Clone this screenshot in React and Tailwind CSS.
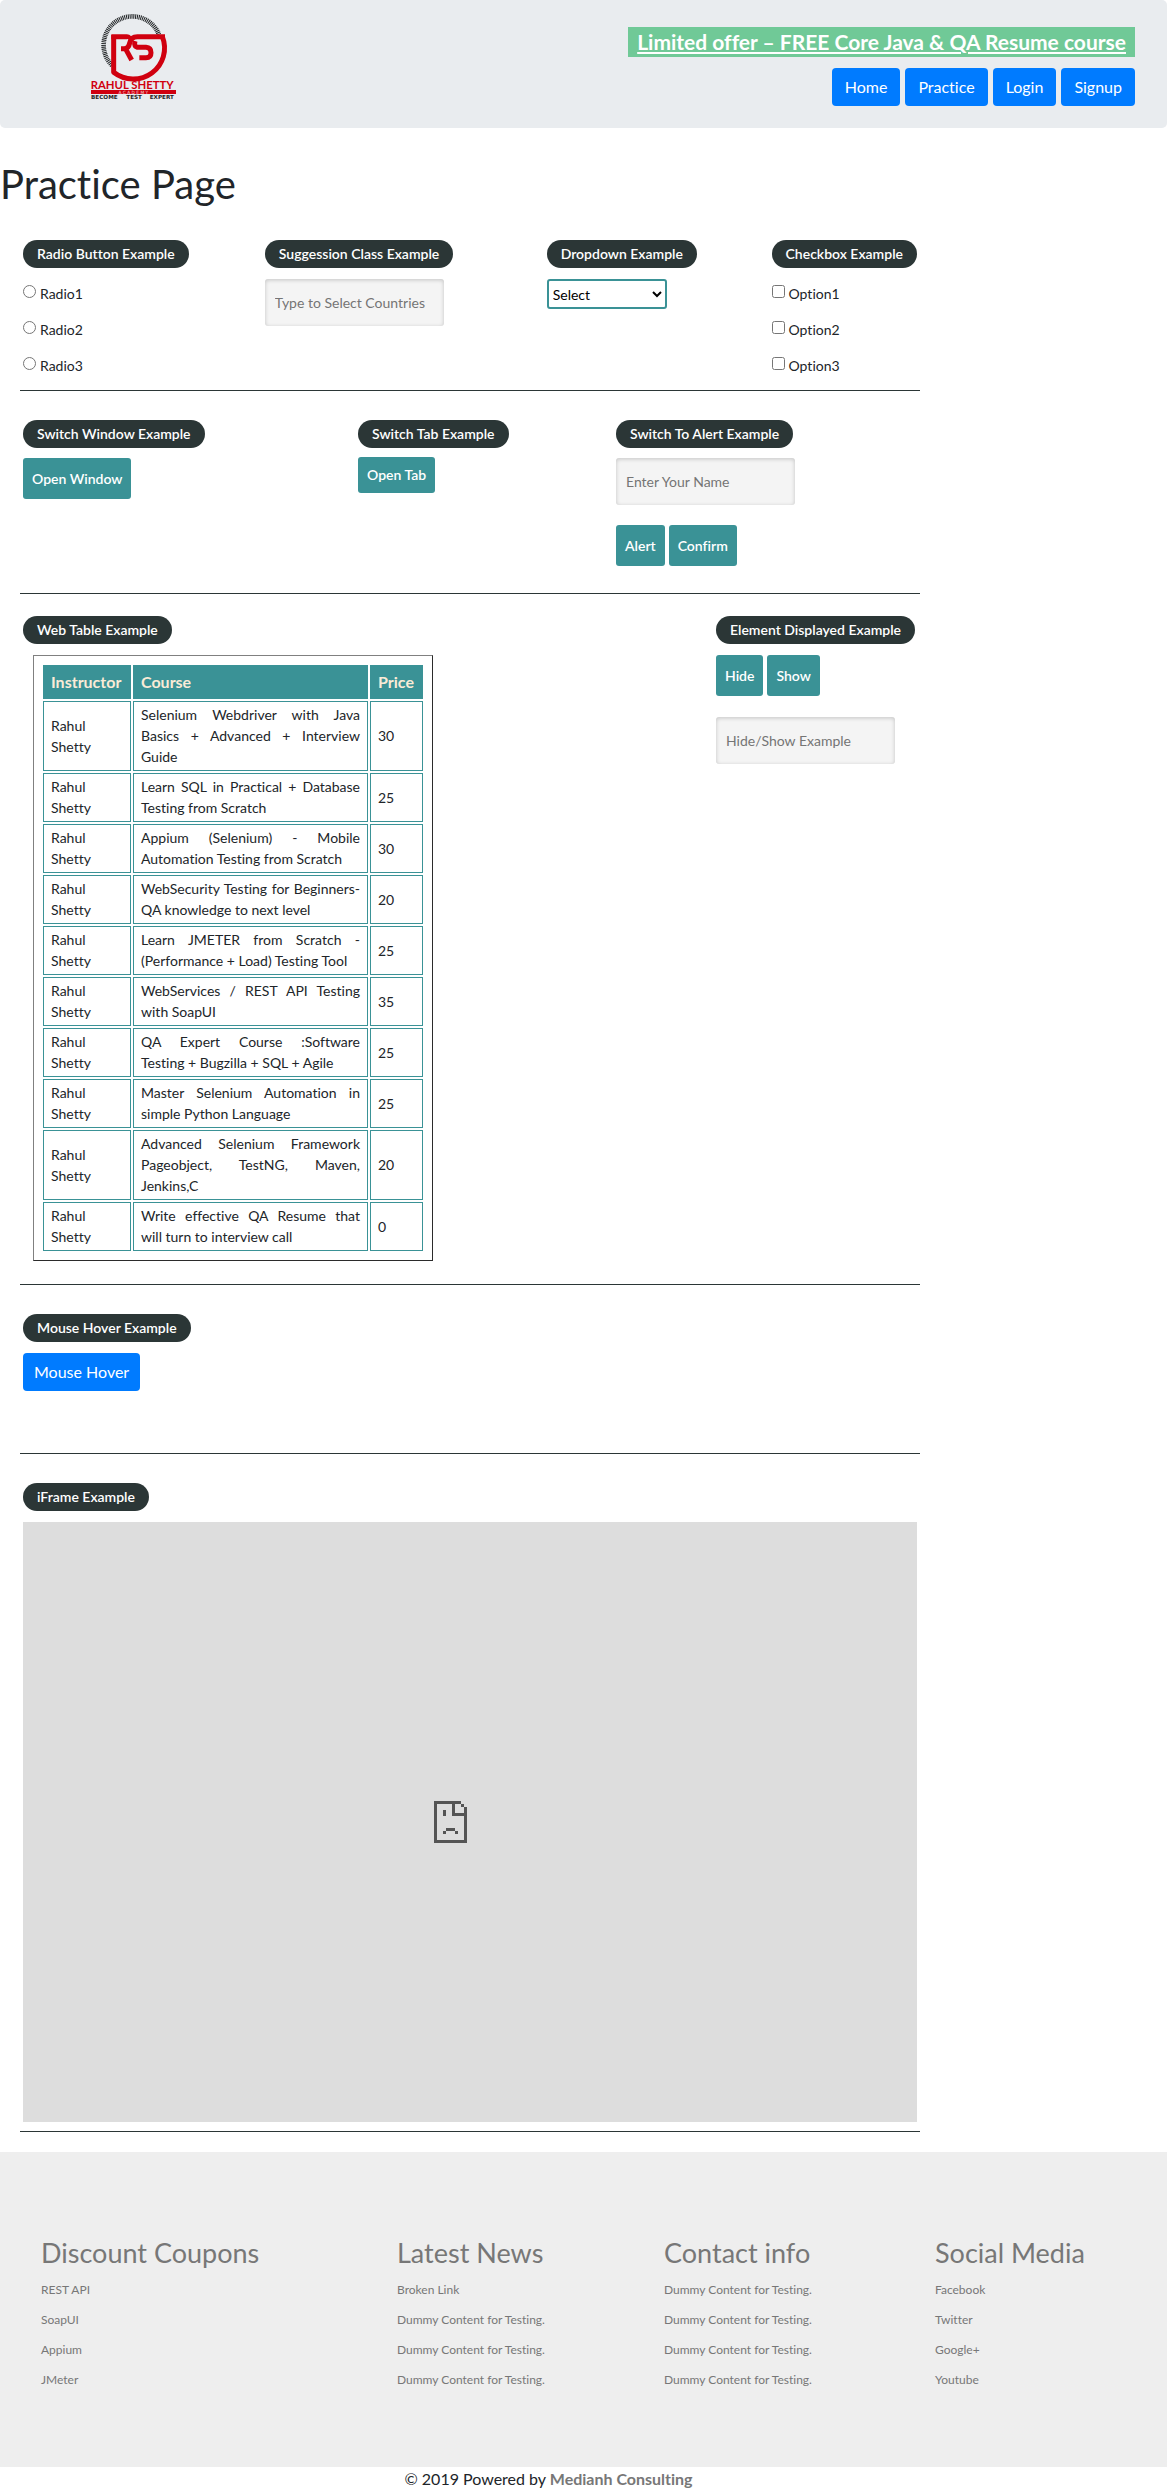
import { useState } from "react";

const COURSES = [
  ["Selenium Webdriver with Java Basics + Advanced + Interview Guide", 30],
  ["Learn SQL in Practical + Database Testing from Scratch", 25],
  ["Appium (Selenium) - Mobile Automation Testing from Scratch", 30],
  ["WebSecurity Testing for Beginners-QA knowledge to next level", 20],
  ["Learn JMETER from Scratch - (Performance + Load) Testing Tool", 25],
  ["WebServices / REST API Testing with SoapUI", 35],
  ["QA Expert Course :Software Testing + Bugzilla + SQL + Agile", 25],
  ["Master Selenium Automation in simple Python Language", 25],
  ["Advanced Selenium Framework Pageobject, TestNG, Maven, Jenkins,C", 20],
  ["Write effective QA Resume that will turn to interview call", 0],
];

const DUMMY = "Dummy Content for Testing.";

const FOOTER = [
  ["Discount Coupons", ["REST API", "SoapUI", "Appium", "JMeter"]],
  ["Latest News", ["Broken Link", DUMMY, DUMMY, DUMMY]],
  ["Contact info", [DUMMY, DUMMY, DUMMY, DUMMY]],
  ["Social Media", ["Facebook", "Twitter", "Google+", "Youtube"]],
];

function Logo() {
  return (
    <svg viewBox="33 27 255 255" className="h-[85px] w-[85px]" role="img" aria-label="Rahul Shetty Academy">
      <path d="M96 181A86 86 0 1 1 237 89" fill="none" stroke="#1f2224" strokeWidth="14" strokeDasharray="3 2.4" />
      <g fill="none" stroke="#d0000f" strokeWidth="15">
        <path d="M94 95H140Q150 96 147 104" />
        <path d="M101 90V202A94 93 0 0 0 247 95" strokeLinejoin="round" />
        <path d="M123 131H132Q146 131 149 114Q153 95 172 95H255" />
        <path d="M138 134L155 165" />
        <path d="M165 108Q160 127 176 127H198Q213 128 213 143Q213 158 198 158H178" />
      </g>
      <text x="32" y="251" fontFamily="Lato, sans-serif" fontSize="34" fontWeight="700" fill="#d0000f">RAHUL SHETTY</text>
      <rect x="33" y="255" width="255" height="12" fill="#d0000f" />
      <text x="160" y="266" textAnchor="middle" fontFamily="DejaVu Sans, sans-serif" fontSize="13" fill="#f3d5d8">A C A D E M Y</text>
      <g fontFamily="DejaVu Sans, sans-serif" fontSize="17" fontWeight="700" fill="#1f2224">
        <text x="33" y="281">BECOME</text>
        <text x="139" y="281">TEST</text>
        <text x="209" y="281">EXPERT</text>
      </g>
    </svg>
  );
}

function Legend({ children }) {
  return (
    <h2 className="w-fit rounded-full bg-[#2b3636] px-[14px] text-sm leading-7 font-semibold whitespace-nowrap text-white">
      {children}
    </h2>
  );
}

function TealButton({ children, className = "h-[41px]" }) {
  return (
    <button type="button" className={`rounded-[3px] bg-[#3a9296] px-[9px] text-sm font-semibold whitespace-nowrap text-white ${className}`}>
      {children}
    </button>
  );
}

function TextBox({ label }) {
  return (
    <input
      type="text"
      aria-label={label}
      placeholder={label}
      className="block h-[47px] w-[179px] rounded-[3px] bg-[#f4f4f4] px-[10px] text-sm text-[#212529] shadow-[inset_0_1px_4px_rgba(0,0,0,0.2)] placeholder:text-[#757575]"
    />
  );
}

function Choices({ type, names }) {
  return (
    <div className="mt-[15px] flex flex-col gap-[15px]">
      {names.map((name) => (
        <label key={name} className="flex items-start gap-1 text-sm leading-[21px]">
          <input type={type} name={type} className="mt-[2px] h-[13px] w-[13px]" />
          {name}
        </label>
      ))}
    </div>
  );
}

function NavButton({ children }) {
  return (
    <a href="#" className="rounded bg-[#007bff] px-[13px] py-[7px] text-base leading-6 text-white">
      {children}
    </a>
  );
}

function CourseTable() {
  return (
    <table className="mt-[11px] ml-[10px] w-[400px] table-fixed border-separate border-spacing-[2px] border border-t-[#808080] border-r-[#2b2b2b] border-b-[#2b2b2b] border-l-[#808080] p-[7px] text-sm leading-[21px]">
      <colgroup>
        <col className="w-[88px]" />
        <col className="w-[235px]" />
        <col className="w-[53px]" />
      </colgroup>
      <thead>
        <tr className="h-[34px] text-left text-base text-[#faebd7]">
          {["Instructor", "Course", "Price"].map((title) => (
            <th key={title} className="bg-[#3a9296] px-2 py-0 font-bold">{title}</th>
          ))}
        </tr>
      </thead>
      <tbody>
        {COURSES.map(([course, price]) => (
          <tr key={course}>
            <td className="border border-[#3a9296] px-[7px] pt-[2px] pb-[3px]">Rahul Shetty</td>
            <td className="border border-[#3a9296] px-[7px] pt-[2px] pb-[3px] text-justify">{course}</td>
            <td className="border border-[#3a9296] px-[7px] pt-[2px] pb-[3px]">{price}</td>
          </tr>
        ))}
      </tbody>
    </table>
  );
}

function BrokenPage() {
  return (
    <svg viewBox="0 0 11 14" className="h-[42px] w-[33px]" fill="#545454" shapeRendering="crispEdges" aria-hidden="true">
      <path d="M0 0H9V1H7V4H10V2H11V14H0ZM1 1V13H10V5H6V1Z" fillRule="evenodd" />
      <path d="M9 1H10V2H9ZM3 3H4V5H3ZM4 9H7V10H4ZM3 10H4V11H3ZM7 10H8V11H7Z" />
    </svg>
  );
}

export default function App() {
  const [choice, setChoice] = useState("");
  return (
    <div className="bg-white font-[Lato,sans-serif] text-[#212529] [font-variant-ligatures:none]">
      <header className="flex min-h-[128px] items-start justify-between rounded-[5px] bg-[#e9ecef] pr-8 pl-[91px]">
        <div className="pt-[14px]">
          <Logo />
        </div>
        <div className="flex flex-col items-end gap-[11px] pt-[27px]">
          <a href="#" className="bg-[#70c997] px-[9px] text-[21px] leading-[30px] font-bold text-white underline decoration-2 underline-offset-2">
            Limited offer – FREE Core Java &amp; QA Resume course
          </a>
          <nav className="flex gap-[5px]">
            <NavButton>Home</NavButton>
            <NavButton>Practice</NavButton>
            <NavButton>Login</NavButton>
            <NavButton>Signup</NavButton>
          </nav>
        </div>
      </header>

      <h1 className="mt-8 text-[40px] leading-[48px]">Practice Page</h1>

      <main className="mt-[3px] ml-5 max-w-[900px]">
        <section className="grid grid-cols-[242fr_282fr_225fr_145fr] border-b border-[#2b3636] px-[3px] pt-[29px] pb-[14px]">
          <div>
            <Legend>Radio Button Example</Legend>
            <Choices type="radio" names={["Radio1", "Radio2", "Radio3"]} />
          </div>
          <div className="flex flex-col gap-[11px]">
            <Legend>Suggession Class Example</Legend>
            <TextBox label="Type to Select Countries" />
          </div>
          <div className="flex flex-col gap-[11px]">
            <Legend>Dropdown Example</Legend>
            <select
              aria-label="Dropdown Example"
              value={choice}
              onChange={(e) => setChoice(e.target.value)}
              className="h-[30px] w-[120px] rounded-[3px] border-2 border-[#3a9296] bg-white text-sm text-black"
            >
              <option value="">Select</option>
              <option value="1">Option1</option>
              <option value="2">Option2</option>
              <option value="3">Option3</option>
            </select>
          </div>
          <div>
            <Legend>Checkbox Example</Legend>
            <Choices type="checkbox" names={["Option1", "Option2", "Option3"]} />
          </div>
        </section>

        <section className="grid grid-cols-[335fr_258fr_301fr] items-start border-b border-[#2b3636] px-[3px] pt-[29px] pb-[27px]">
          <div className="flex flex-col items-start gap-[10px]">
            <Legend>Switch Window Example</Legend>
            <TealButton>Open Window</TealButton>
          </div>
          <div className="flex flex-col items-start gap-[9px]">
            <Legend>Switch Tab Example</Legend>
            <TealButton className="h-9">Open Tab</TealButton>
          </div>
          <div>
            <Legend>Switch To Alert Example</Legend>
            <div className="mt-[10px]">
              <TextBox label="Enter Your Name" />
            </div>
            <div className="mt-5 flex gap-1">
              <TealButton>Alert</TealButton>
              <TealButton>Confirm</TealButton>
            </div>
          </div>
        </section>

        <section className="grid grid-cols-[693fr_201fr] items-start border-b border-[#2b3636] px-[3px] pt-[22px] pb-[23px]">
          <div>
            <Legend>Web Table Example</Legend>
            <CourseTable />
          </div>
          <div>
            <Legend>Element Displayed Example</Legend>
            <div className="mt-[11px] mb-[21px] flex gap-1">
              <TealButton>Hide</TealButton>
              <TealButton>Show</TealButton>
            </div>
            <TextBox label="Hide/Show Example" />
          </div>
        </section>

        <section className="flex flex-col items-start gap-[11px] border-b border-[#2b3636] px-[3px] pt-[29px] pb-[62px]">
          <Legend>Mouse Hover Example</Legend>
          <button type="button" className="rounded bg-[#007bff] px-[11px] py-[7px] text-base leading-6 text-white">
            Mouse Hover
          </button>
        </section>

        <section className="flex flex-col gap-[11px] border-b border-[#2b3636] px-[3px] pt-[29px] pb-[9px]">
          <Legend>iFrame Example</Legend>
          <div className="flex h-[600px] items-center justify-center bg-[#ddd] pr-10">
            <BrokenPage />
          </div>
        </section>
      </main>

      <footer>
        <div className="mt-5 grid grid-cols-[356fr_267fr_271fr_191fr] bg-[#eee] px-[41px] pt-[84px] pb-[78px] text-[#777]">
          {FOOTER.map(([title, links]) => (
            <div key={title}>
              <h3 className="text-[27px] leading-[34px] whitespace-nowrap">{title}</h3>
              <ul className="mt-[11px] flex flex-col gap-3 text-xs leading-[18px]">
                {links.map((link, i) => (
                  <li key={i}>
                    <a href="#">{link}</a>
                  </li>
                ))}
              </ul>
            </div>
          ))}
        </div>
        <p className="pr-[70px] text-center text-base leading-6">
          © 2019 Powered by{" "}
          <a href="#" className="font-bold text-[#777]">Medianh Consulting</a>
        </p>
      </footer>
    </div>
  );
}
